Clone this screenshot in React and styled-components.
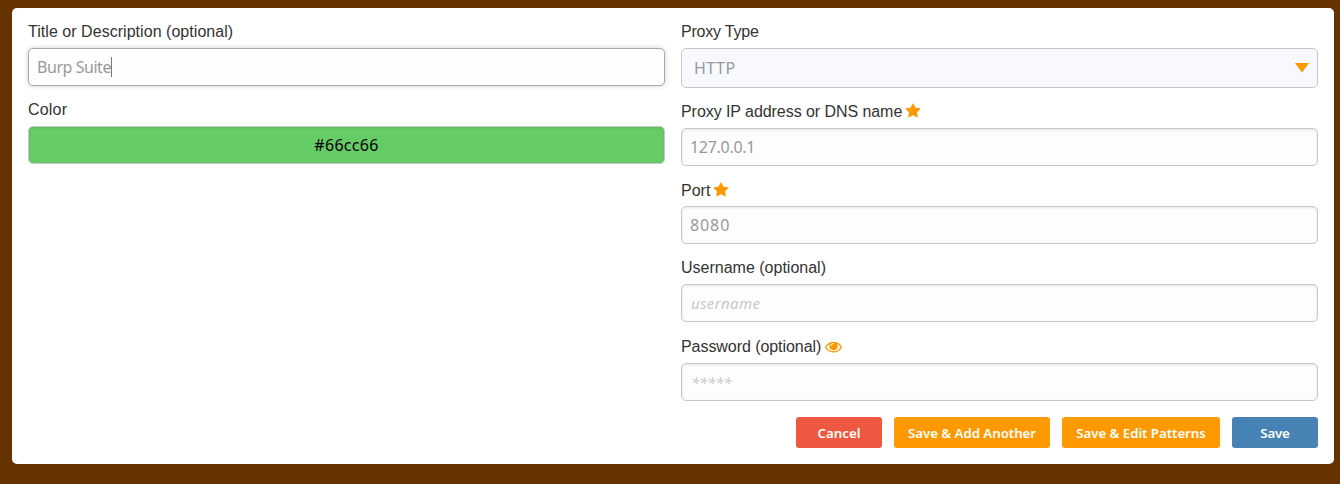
import React from "react";
import styled, { createGlobalStyle, css } from "styled-components";

const Global = createGlobalStyle`
  *, *::before, *::after { box-sizing: border-box; }
  body { margin: 0; background: #663300; }
`;

const Page = styled.main`
  min-height: 484px;
  padding: 8px 6px 20px 12px;
  background: #663300;
`;

const Card = styled.form`
  display: grid;
  grid-template-columns: 637px 637px;
  column-gap: 16px;
  height: 456px;
  padding: 16px;
  background: #fff;
  border-radius: 5px;
`;

const Column = styled.div`
  display: flex;
  flex-direction: column;
`;

const Field = styled.div`
  display: flex;
  flex-direction: column;
  margin-bottom: ${(p) => p.$gap ?? 16}px;
`;

const Label = styled.label`
  display: flex;
  align-items: flex-start;
  height: 24px;
  padding-top: ${(p) => p.$drop ?? 0}px;
  color: #333;
  font: 16px/16px "Liberation Sans", Arial, sans-serif;
  letter-spacing: ${(p) => p.$track ?? 0}px;
  white-space: nowrap;
`;

const Icon = styled.svg`
  flex: none;
  width: ${(p) => p.$size}px;
  height: ${(p) => p.$size}px;
  margin-left: ${(p) => p.$left ?? 3}px;
  margin-top: ${(p) => p.$top ?? -1}px;
  fill: #ff9900;
`;

const box = css`
  width: 100%;
  height: 38px;
  border: 1px solid #c8c8c8;
  border-radius: 5px;
  outline: none;
  font: 400 16px/22px "Noto Sans", sans-serif;
  letter-spacing: ${(p) => p.$track ?? 0}px;
`;

const Input = styled.div`
  ${box}
  display: flex;
  align-items: center;
  padding: 0 8px;
  color: #999;
  background: #fdfdfd;
  box-shadow: inset 0 1px 3px rgba(0, 0, 0, 0.1);
  ${(p) => p.$focused && css`
    border-color: #aaa;
    background: #fefefe;
    box-shadow: 0 0 5px rgba(0, 0, 0, 0.2);
  `}
  ${(p) => p.$placeholder && css`
    padding-left: 9px;
    color: #c8c8c8;
    font-size: 15px;
    font-style: italic;
  `}
`;

const Caret = styled.span`
  width: 1px;
  height: 20px;
  background: #777;
`;

const Swatch = styled.div`
  ${box}
  display: flex;
  align-items: center;
  justify-content: center;
  color: #000;
  background: #66cc66;
  box-shadow: inset 0 1px 3px rgba(0, 0, 0, 0.1);
`;

const Select = styled.div`
  ${box}
  display: flex;
  align-items: center;
  justify-content: space-between;
  height: 40px;
  padding: 0 8px 0 12px;
  color: #999;
  background: #f8f8ff;
`;

const Arrow = styled.svg`
  width: 14px;
  height: 10px;
  fill: #ff9900;
`;

const Actions = styled.div`
  display: flex;
  justify-content: flex-end;
  gap: 12px;
`;

const Button = styled.button`
  width: ${(p) => p.$width}px;
  height: 31px;
  padding: 1px 0 0;
  border: 0;
  border-radius: 3px;
  color: #fff;
  background: ${(p) => p.$color};
  font: 600 13.33px/30px "Noto Sans", sans-serif;
  letter-spacing: ${(p) => p.$track ?? 0}px;
  white-space: nowrap;
`;

const Star = (props) => (
  <Icon viewBox="0 0 1792 1792" $size={16} {...props}>
    <path d="M1728 647q0 22-26 48l-363 354 86 500q1 7 1 20 0 21-10.5 35.5t-30.5 14.5q-19 0-40-12l-449-236-449 236q-22 12-40 12-21 0-31.5-14.5t-10.5-35.5q0-6 2-20l86-500-364-354q-25-27-25-48 0-37 56-46l502-73 225-455q19-41 49-41t49 41l225 455 502 73q56 9 56 46z" />
  </Icon>
);

const Eye = () => (
  <Icon viewBox="0 0 1792 1792" $size={17} $left={4} $top={-1}>
    <path d="M1664 960q-152-236-381-353 61 104 61 225 0 185-131.5 316.5t-316.5 131.5-316.5-131.5-131.5-316.5q0-121 61-225-229 117-381 353 133 205 333.5 326.5t434.5 121.5 434.5-121.5 333.5-326.5zm-720-384q0-20-14-34t-34-14q-125 0-214.5 89.5t-89.5 214.5q0 20 14 34t34 14 34-14 14-34q0-86 61-147t147-61q20 0 34-14t14-34zm848 384q0 34-20 69-140 230-376.5 368.5t-499.5 138.5-499.5-139-376.5-368q-20-35-20-69t20-69q140-229 376.5-368t499.5-139 499.5 139 376.5 368q20 35 20 69z" />
  </Icon>
);

export default function App() {
  return (
    <Page>
      <Global />
      <Card>
        <Column>
          <Field>
            <Label $track={0.04}>Title or Description (optional)</Label>
            <Input $focused $track={-0.45}>Burp Suite<Caret /></Input>
          </Field>
          <Field>
            <Label $track={0.2}>Color</Label>
            <Swatch $track={0.3}>#66cc66</Swatch>
          </Field>
        </Column>
        <Column>
          <Field>
            <Label $track={-0.2}>Proxy Type</Label>
            <Select $track={0.5}>
              HTTP
              <Arrow viewBox="0 0 14 10"><path d="M0 0h14L7 9.5z" /></Arrow>
            </Select>
          </Field>
          <Field>
            <Label $track={-0.06}>Proxy IP address or DNS name<Star /></Label>
            <Input $track={-0.3}>127.0.0.1</Input>
          </Field>
          <Field>
            <Label $drop={1}>Port<Star /></Label>
            <Input $track={0.9}>8080</Input>
          </Field>
          <Field $gap={17}>
            <Label>Username (optional)</Label>
            <Input $placeholder $track={0.35}>username</Input>
          </Field>
          <Field>
            <Label $track={-0.06}>Password (optional)<Eye /></Label>
            <Input $placeholder $track={-0.2}>*****</Input>
          </Field>
          <Actions>
            <Button type="button" $width={86} $color="#ee5840" $track={-0.05}>Cancel</Button>
            <Button type="button" $width={156} $color="#ff9900" $track={-0.07}>Save &amp; Add Another</Button>
            <Button type="button" $width={158} $color="#ff9900" $track={-0.07}>Save &amp; Edit Patterns</Button>
            <Button type="button" $width={86} $color="#4682b4" $track={-0.2}>Save</Button>
          </Actions>
        </Column>
      </Card>
    </Page>
  );
}
